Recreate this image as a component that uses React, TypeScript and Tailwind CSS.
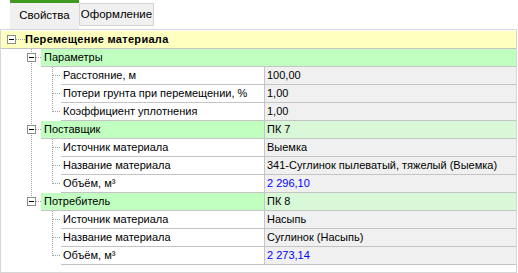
import React from "react";

const DOT = "#a0a0a0";

function Box({ x }: { x: number }) {
  return (
    <g shapeRendering="crispEdges">
      <rect x={x + 0.5} y={4.5} width={8} height={8} fill="#ffffff" stroke="#8c8c8c" />
      <line x1={x + 2} y1={8.5} x2={x + 7} y2={8.5} stroke="#000000" />
    </g>
  );
}

function VDot({ x, y1, y2 }: { x: number; y1: number; y2: number }) {
  return <line x1={x + 0.5} y1={y1} x2={x + 0.5} y2={y2} stroke={DOT} strokeDasharray="1 1" shapeRendering="crispEdges" />;
}

function HDot({ x1, x2, y = 8 }: { x1: number; x2: number; y?: number }) {
  return <line x1={x1} y1={y + 0.5} x2={x2} y2={y + 0.5} stroke={DOT} strokeDasharray="1 1" shapeRendering="crispEdges" />;
}

function HeaderRow({ title }: { title: string }) {
  return (
    <div className="flex h-[18px] bg-[#ffffc0] border-b border-[#c4c4c4]">
      <svg width={24} height={17} className="shrink-0">
        <Box x={6} />
        <HDot x1={15} x2={24} />
      </svg>
      <div className="font-bold leading-[17px] tracking-[0.3px]">{title}</div>
    </div>
  );
}

function GroupRow({ name, value, last }: { name: string; value?: string; last?: boolean }) {
  return (
    <div className="flex h-[18px]">
      <svg width={40} height={18} className="shrink-0">
        <VDot x={30} y1={0} y2={4} />
        {!last && <VDot x={30} y1={14} y2={18} />}
        <Box x={26} />
        <HDot x1={35} x2={40} />
      </svg>
      {value === undefined ? (
        <div className="flex-1 bg-[#c0ffc0] border-b border-[#c4c4c4] pl-[3px] leading-[17px]">{name}</div>
      ) : (
        <>
          <div className="w-[224px] shrink-0 bg-[#c0ffc0] border-b border-r border-[#c4c4c4] pl-[3px] leading-[17px]">{name}</div>
          <div className="flex-1 bg-[#d8f8d8] border-b border-[#c4c4c4] pl-[2px] leading-[17px]">{value}</div>
        </>
      )}
    </div>
  );
}

function LeafRow({ name, value, last, parentLast, blue }: { name: string; value: string; last?: boolean; parentLast?: boolean; blue?: boolean }) {
  return (
    <div className="flex h-[18px]">
      <svg width={60} height={18} className="shrink-0">
        {!parentLast && <VDot x={30} y1={0} y2={18} />}
        <VDot x={51} y1={0} y2={last ? 9 : 18} />
        <HDot x1={52} x2={60} />
      </svg>
      <div className="w-[204px] shrink-0 bg-white border-b border-r border-[#c4c4c4] pl-[2px] leading-[17px]">{name}</div>
      <div className={`flex-1 bg-[#f0f0f0] border-b border-[#c4c4c4] pl-[2px] leading-[17px] ${blue ? "text-[#0000ff]" : ""}`}>{value}</div>
    </div>
  );
}

export default function App() {
  return (
    <div
      className="w-[518px] h-[273px] bg-white text-black text-[11px] overflow-hidden"
      style={{ fontFamily: '"Liberation Sans", Arial, sans-serif' }}
    >
      <div className="flex h-[29px] pl-[10px] text-[11.5px]">
        <div className="w-[69px] h-[29px] bg-[#f0f0f0] border-t-[3px] border-[#3f9a1f] flex items-center justify-center">
          Свойства
        </div>
        <div className="mt-[3px] w-[75px] h-[23px] bg-[#f0f0f0] border border-[#d4d4d4] flex items-center justify-center">
          Оформление
        </div>
      </div>
      <div className="w-[517px] h-[244px] border border-[#d6d6d6] pt-[1px]">
        <HeaderRow title="Перемещение материала" />
        <GroupRow name="Параметры" />
        <LeafRow name="Расстояние, м" value="100,00" />
        <LeafRow name="Потери грунта при перемещении, %" value="1,00" />
        <LeafRow name="Коэффициент уплотнения" value="1,00" last />
        <GroupRow name="Поставщик" value="ПК 7" />
        <LeafRow name="Источник материала" value="Выемка" />
        <LeafRow name="Название материала" value="341-Суглинок пылеватый, тяжелый (Выемка)" />
        <LeafRow name="Объём, м³" value="2 296,10" last blue />
        <GroupRow name="Потребитель" value="ПК 8" last />
        <LeafRow name="Источник материала" value="Насыпь" parentLast />
        <LeafRow name="Название материала" value="Суглинок (Насыпь)" parentLast />
        <LeafRow name="Объём, м³" value="2 273,14" last parentLast blue />
      </div>
    </div>
  );
}
